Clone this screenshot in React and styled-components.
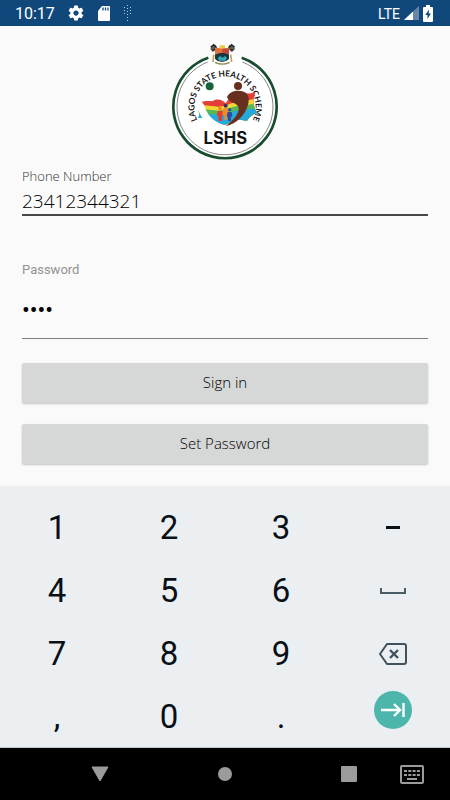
import { useState } from "react";
import styled, { createGlobalStyle } from "styled-components";

const GlobalStyle = createGlobalStyle`
  * {
    box-sizing: border-box;
  }

  body {
    margin: 0;
    background-color: #fafafa;
    font-family: Roboto, "Liberation Sans", sans-serif;
  }

  button,
  input {
    margin: 0;
    padding: 0;
    border: 0;
    outline: none;
    background: none;
    font-family: inherit;
  }
`;

const Screen = styled.div`
  display: flex;
  flex-direction: column;
  min-height: 100vh;
`;

// status bar
const StatusBar = styled.header`
  display: flex;
  align-items: center;
  justify-content: space-between;
  height: 26px;
  padding: 0 17px 0 15px;
  background-color: #10487c;
  color: #fff;
`;

const StatusGroup = styled.div`
  display: flex;
  align-items: center;
  gap: ${(props) => props.$gap};
`;

const Clock = styled.time`
  padding-top: 2px;
  font-size: 16px;
  line-height: 24px;
`;

const Network = styled.span`
  padding-top: 2px;
  font-size: 14px;
  line-height: 24px;
`;

// sign in form
const Main = styled.main`
  display: flex;
  flex: 1;
  flex-direction: column;
  padding: 10px 22px 22px;
  background-color: #fafafa;
`;

const LogoWrap = styled.div`
  display: flex;
  justify-content: center;
`;

const Form = styled.form`
  display: flex;
  flex-direction: column;
  padding-top: 6px;
  font-family: "Open Sans", "Noto Sans", sans-serif;
`;

const Label = styled.label`
  color: ${(props) => (props.$muted ? "#929292" : "#333")};
  font-family: ${(props) => (props.$muted ? "Roboto, sans-serif" : "inherit")};
  font-size: 13px;
  font-weight: ${(props) => (props.$muted ? 400 : 300)};
  line-height: 16px;
`;

const PhoneInput = styled.input`
  width: 100%;
  height: 32px;
  margin-bottom: 46px;
  padding-top: 4px;
  border-bottom: 2px solid #484848;
  color: #000;
  font-size: 19px;
  font-weight: 300;
`;

const PasswordInput = styled.input`
  width: 100%;
  height: 61px;
  margin-bottom: 24px;
  padding-top: 4px;
  border-bottom: 1px solid #7c7c7c;
  color: #000;
  font-family: Roboto, sans-serif;
  font-size: 23px;
`;

const FormButton = styled.button`
  height: 40px;
  margin-bottom: 21px;
  padding-bottom: 2px;
  border-radius: 2px;
  background-color: #d6d8d7;
  box-shadow: 0 1px 2px rgba(0, 0, 0, 0.22);
  color: #000;
  font-size: 15px;
  font-weight: 300;
  cursor: pointer;

  &:last-child {
    margin-bottom: 0;
  }
`;

// number keyboard
const Keypad = styled.section`
  display: grid;
  grid-template-columns: repeat(4, 1fr);
  grid-auto-rows: 63px;
  padding: 9px 2px 0 0;
  border-bottom: 1px solid #c3c8cb;
  background-color: #ebeff2;
`;

const Key = styled.button`
  display: flex;
  align-items: center;
  justify-content: center;
  padding: 2px 0 0 2px;
  color: #0a1015;
  font-size: 33px;
  line-height: 61px;
  cursor: pointer;
`;

const EnterKey = styled(Key)`
  align-items: flex-start;
  padding-top: 7px;
`;

const EnterCircle = styled.span`
  display: flex;
  align-items: center;
  justify-content: center;
  width: 38px;
  height: 38px;
  border-radius: 50%;
  background-color: #4db6ac;
`;

// system navigation
const NavBar = styled.nav`
  display: grid;
  grid-template-columns: 76px 1fr 1fr 76px;
  align-items: center;
  height: 52px;
  background-color: #000;
`;

const NavKeys = styled.div`
  display: flex;
  grid-column: 1 / 4;
  justify-content: space-between;
  padding: 0 15px 0 90px;
`;

const NavButton = styled.button`
  display: flex;
  align-items: center;
  justify-content: center;
  min-width: 20px;
  height: 52px;
  cursor: pointer;
`;

const GearIcon = () => (
  <svg width="18" height="18" viewBox="0 0 24 24" fill="#fff">
    <path d="M19.43 12.98c.04-.32.07-.64.07-.98s-.03-.66-.07-.98l2.11-1.65c.19-.15.24-.42.12-.64l-2-3.46c-.12-.22-.39-.3-.61-.22l-2.49 1c-.52-.4-1.08-.73-1.69-.98l-.38-2.65C14.46 2.18 14.25 2 14 2h-4c-.25 0-.46.18-.49.42l-.38 2.65c-.61.25-1.17.59-1.69.98l-2.49-1c-.23-.09-.49 0-.61.22l-2 3.46c-.13.22-.07.49.12.64l2.11 1.65c-.04.32-.07.65-.07.98s.03.66.07.98l-2.11 1.65c-.19.15-.24.42-.12.64l2 3.46c.12.22.39.3.61.22l2.49-1c.52.4 1.08.73 1.69.98l.38 2.65c.03.24.24.42.49.42h4c.25 0 .46-.18.49-.42l.38-2.65c.61-.25 1.17-.59 1.69-.98l2.49 1c.23.09.49 0 .61-.22l2-3.46c.12-.22.07-.49-.12-.64l-2.11-1.65zM12 15.5c-1.93 0-3.5-1.57-3.5-3.5s1.57-3.5 3.5-3.5 3.5 1.57 3.5 3.5-1.57 3.5-3.5 3.5z" />
  </svg>
);

const SdCardIcon = () => (
  <svg width="14" height="17" viewBox="0 0 14 17">
    <path d="M5 1h7a1 1 0 0 1 1 1v13a1 1 0 0 1-1 1H2a1 1 0 0 1-1-1V6z" fill="#fff" />
    <path d="M6 2.500v3M8.500 2.500v3M11 2.500v3" stroke="#10487c" strokeWidth="1.300" />
  </svg>
);

const DotsIcon = () => (
  <svg width="10" height="18" viewBox="0 0 10 18" fill="#b9d0e6">
    {[
      [4, 1], [1, 3], [4, 4], [7, 3], [1, 6], [4, 7], [7, 6],
      [1, 9], [4, 10], [7, 9], [4, 13], [4, 16],
    ].map(([x, y]) => (
      <rect key={`${x}-${y}`} x={x} y={y} width="1" height="1" />
    ))}
  </svg>
);

const SignalIcon = () => (
  <svg width="15" height="14" viewBox="0 0 15 14">
    <path d="M15 0v14H0z" fill="#6687aa" />
    <path d="M9 5.600V14H0z" fill="#fff" />
  </svg>
);

const BatteryIcon = () => (
  <svg width="10" height="17" viewBox="0 0 10 17">
    <path d="M3 0h4v2h2a1 1 0 0 1 1 1v13a1 1 0 0 1-1 1H1a1 1 0 0 1-1-1V3a1 1 0 0 1 1-1h2z" fill="#fff" />
    <path d="M6 4.500 2.300 10h2.200v4L7.900 8.500H5.700z" fill="#10487c" />
  </svg>
);

const Logo = () => (
  <svg width="120" height="126" viewBox="0 0 360 378" role="img" aria-label="Lagos State Health Scheme">
    <defs>
      <path id="ringText" d="M97 253A92 92 0 1 1 263 253" />
      <clipPath id="flag">
        <path d="M98 200C118 194 134 194 142 196C154 186 172 190 182 202L196 182C220 166 246 178 272 168C262 190 264 212 277 232C262 234 254 244 246 254L214 250L182 266C160 264 144 262 128 252C120 246 110 244 100 246C106 234 98 218 98 200Z" />
      </clipPath>
    </defs>
    <circle cx="180" cy="211" r="155" fill="#fff" />
    <path d="M130 65A155 155 0 1 0 230 65" fill="none" stroke="#174d2e" strokeWidth="8" />
    <path d="M128 78A144 144 0 1 0 232 78" fill="none" stroke="#444c47" strokeWidth="2" />

    {/* crest */}
    <path d="M144 48 136 40l4-10 11-4 6 10zM200 48l10-8-4-10-12-4-6 10z" fill="#5b5c4e" />
    <path d="M137 34l9-8 8 8M209 34l-9-8-8 8M142 44l8-4M204 44l-8-4" fill="none" stroke="#24282a" strokeWidth="4" />
    <path d="M150 36h42v30c-6 14-36 14-42 0z" fill="#e2733f" />
    <path d="M164 28h16v10h-16z" fill="#eac83e" />
    <path d="M172 38h20v16h-20z" fill="#c4483a" />
    <path d="M150 56c14-7 28-7 42 0v12c-8 12-34 12-42 0z" fill="#17383f" />
    <path d="M158 66l8-6 6 5 8-5 6 6-5 8h-18z" fill="#36a9b7" />
    <path d="M150 79c14 7 30 7 44 0" fill="none" stroke="#8c8a55" strokeWidth="4" />
    <path d="M146 56l-2 22M197 56l3 22" stroke="#c4a05c" strokeWidth="5" />

    <text fill="#161616" fontFamily="Lato, sans-serif" fontSize="25" fontWeight="700">
      <textPath href="#ringText" startOffset="50%" textAnchor="middle">
        LAGOS STATE HEALTH SCHEME
      </textPath>
    </text>

    {/* striped flag */}
    <g clipPath="url(#flag)">
      <path d="M90 160h190v110H90z" fill="#e53e37" />
      <path d="M90 212c37-12 57 8 94-4 31-14 59-14 96-20v90H90z" fill="#f2d735" />
      <path d="M90 224c38-12 59 8 93-4 31-14 61-12 97-18v80H90z" fill="#55b757" />
      <path d="M90 237c37-10 58 6 94-4 32-12 59-12 96-16v70H90z" fill="#27a8dc" />
    </g>

    {/* two figures forming a heart */}
    <circle cx="134" cy="151" r="12" fill="#176238" />
    <path d="M94 190c14 2 22 12 26 24 7 22 22 42 62 56-34 2-56-6-68-22-14-18-19-38-20-58z" fill="#fff" />
    <circle cx="219" cy="150" r="12" fill="#67301e" />
    <path d="M186 184C194 164 218 162 232 166C250 170 255 186 249 206C241 236 216 262 182 271C204 252 222 236 221 216C219 200 196 204 186 184z" fill="#67301e" />

    {/* family */}
    <g fill="#f08a2c">
      <circle cx="165" cy="218" r="6" />
      <path d="M158 225h14l4 13-5 2v15h-11v-15l-5-2z" fill="#dc3f31" />
    </g>
    <g fill="#3f2a63">
      <circle cx="182" cy="209" r="6" />
      <path d="M175 217h14l3 20-6 3v12h-8v-12l-6-3z" fill="#f08a2c" />
    </g>
    <g fill="#274f9e">
      <circle cx="194" cy="221" r="5" />
      <path d="M188 228h12l2 13-4 2v12h-9v-12l-4-2z" />
    </g>

    <text x="181" y="325" fill="#151515" fontFamily="Inter, sans-serif" fontSize="50" fontWeight="700" textAnchor="middle">
      LSHS
    </text>
  </svg>
);

const MinusIcon = () => (
  <svg width="14" height="3" viewBox="0 0 14 3">
    <path d="M0 0h14v3H0z" fill="#0a1015" />
  </svg>
);

const SpaceIcon = () => (
  <svg width="26" height="8" viewBox="0 0 26 8">
    <path d="M1 1v5h24V1" fill="none" stroke="#4b5c66" strokeWidth="2" />
  </svg>
);

const BackspaceIcon = () => (
  <svg width="28" height="22" viewBox="0 0 28 22" fill="none" stroke="#41515b" strokeWidth="2">
    <path d="M8 1h17q2 0 2 2v16q0 2-2 2H8L1 11z" strokeLinejoin="round" />
    <path d="m11 7 8 8M19 7l-8 8" strokeWidth="2.400" />
  </svg>
);

const NextIcon = () => (
  <svg width="24" height="14" viewBox="0 0 24 14" fill="none" stroke="#fff" strokeWidth="2.400">
    <path d="M0 7h18M13 1l6 6-6 6M22.500 0v14" />
  </svg>
);

const KeyboardIcon = () => (
  <svg width="24" height="19" viewBox="0 0 24 19">
    <rect x="1" y="1" width="22" height="17" rx="1" fill="none" stroke="#9b9b9b" strokeWidth="2" />
    <path d="M4 6h16M4 10h16" stroke="#9b9b9b" strokeWidth="2" strokeDasharray="3 1.300" />
    <path d="M7 14h10" stroke="#9b9b9b" strokeWidth="2" />
  </svg>
);

const keys = [
  "1", "2", "3", "minus",
  "4", "5", "6", "space",
  "7", "8", "9", "backspace",
  ",", "0", ".",
];

const keyIcons = {
  minus: <MinusIcon />,
  space: <SpaceIcon />,
  backspace: <BackspaceIcon />,
};

const App = () => {
  const [phone, setPhone] = useState("23412344321");
  const [password, setPassword] = useState("1234");

  return (
    <>
      <GlobalStyle />
      <Screen>
        <StatusBar>
          <StatusGroup $gap="12px">
            <Clock>10:17</Clock>
            <GearIcon />
            <SdCardIcon />
            <DotsIcon />
          </StatusGroup>
          <StatusGroup $gap="4px">
            <Network>LTE</Network>
            <SignalIcon />
            <BatteryIcon />
          </StatusGroup>
        </StatusBar>

        <Main>
          <LogoWrap>
            <Logo />
          </LogoWrap>
          <Form onSubmit={(e) => e.preventDefault()}>
            <Label htmlFor="phone">Phone Number</Label>
            <PhoneInput id="phone" type="tel" value={phone} onChange={(e) => setPhone(e.target.value)} />
            <Label htmlFor="password" $muted>Password</Label>
            <PasswordInput
              id="password"
              type="password"
              value={password}
              onChange={(e) => setPassword(e.target.value)}
            />
            <FormButton type="submit">Sign in</FormButton>
            <FormButton type="button">Set Password</FormButton>
          </Form>
        </Main>

        <Keypad aria-label="Keypad">
          {keys.map((key) => (
            <Key key={key} type="button" aria-label={key}>
              {keyIcons[key] || key}
            </Key>
          ))}
          <EnterKey type="button" aria-label="Next">
            <EnterCircle>
              <NextIcon />
            </EnterCircle>
          </EnterKey>
        </Keypad>

        <NavBar>
          <NavKeys>
            <NavButton type="button" aria-label="Back">
              <svg width="18" height="16" viewBox="0 0 18 16">
                <path d="M1 1h16L9 15z" fill="#9b9b9b" stroke="#9b9b9b" strokeLinejoin="round" />
              </svg>
            </NavButton>
            <NavButton type="button" aria-label="Home">
              <svg width="14" height="14" viewBox="0 0 14 14">
                <circle cx="7" cy="7" r="7" fill="#9b9b9b" />
              </svg>
            </NavButton>
            <NavButton type="button" aria-label="Recent apps">
              <svg width="16" height="16" viewBox="0 0 16 16">
                <rect width="16" height="16" rx="1" fill="#9b9b9b" />
              </svg>
            </NavButton>
          </NavKeys>
          <NavButton type="button" aria-label="Switch keyboard">
            <KeyboardIcon />
          </NavButton>
        </NavBar>
      </Screen>
    </>
  );
};

export default App;
